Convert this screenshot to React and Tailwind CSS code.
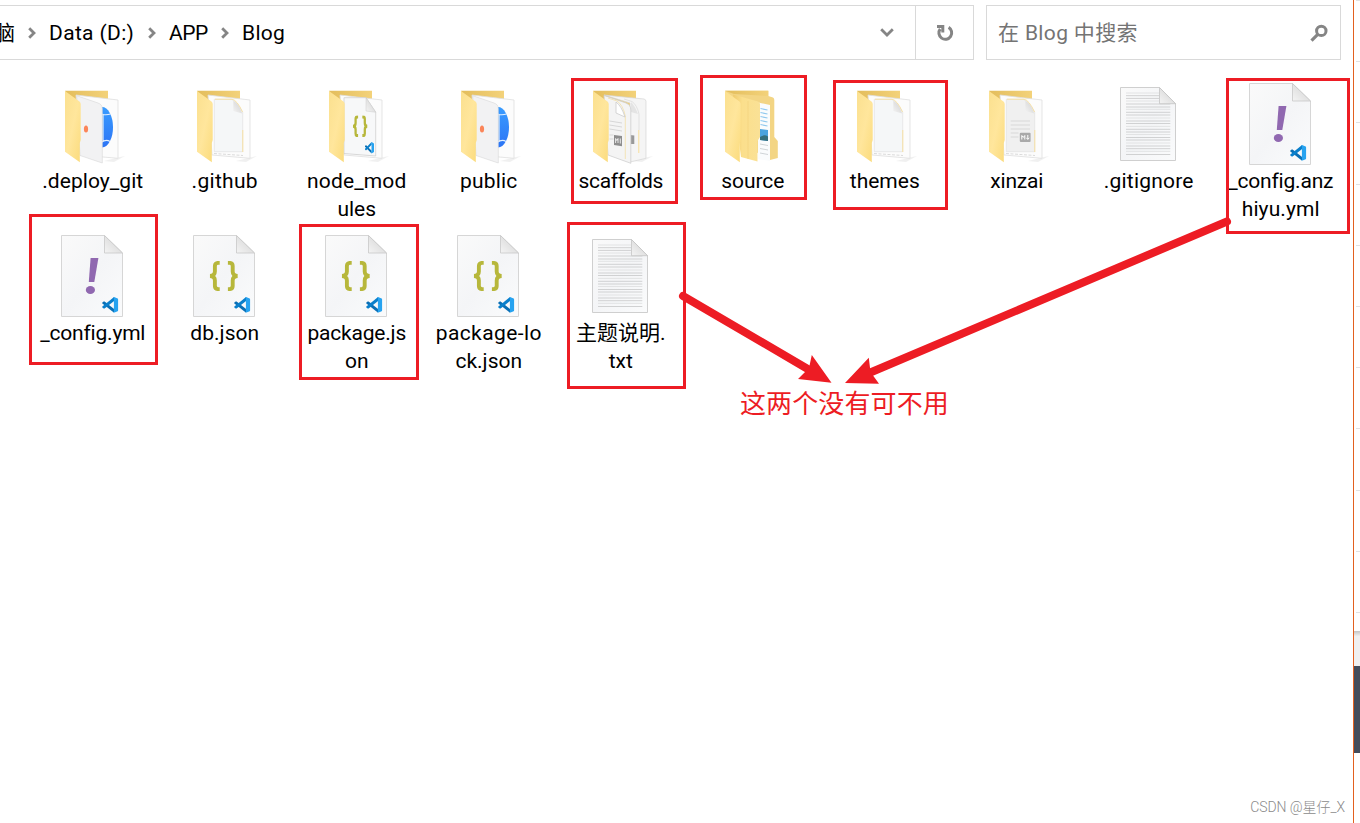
import React from "react";

const SHEET = "M24 12 L66 17 V75.3 L28 72 Z";

function Defs() {
  return (
    <svg className="absolute size-0" aria-hidden="true">
      <defs>
        <linearGradient id="flap" x1="0" y1="0" x2="1" y2="1">
          <stop offset="0" stopColor="#fbe08f" />
          <stop offset="0.5" stopColor="#ffe69c" />
          <stop offset="1" stopColor="#fbdb7c" />
        </linearGradient>
        <linearGradient id="back" x1="0" y1="0" x2="1" y2="0">
          <stop offset="0" stopColor="#e3bd5c" />
          <stop offset="1" stopColor="#f3d27a" />
        </linearGradient>
        <linearGradient id="mid" x1="0" y1="0" x2="1" y2="0">
          <stop offset="0" stopColor="#efca6c" />
          <stop offset="0.35" stopColor="#fbdf8c" />
          <stop offset="1" stopColor="#fae196" />
        </linearGradient>
        <linearGradient id="page" x1="0" y1="0" x2="1" y2="1">
          <stop offset="0" stopColor="#fafafa" />
          <stop offset="0.5" stopColor="#f4f5f7" />
          <stop offset="1" stopColor="#fafbfc" />
        </linearGradient>
        <linearGradient id="fold" x1="0" y1="1" x2="1" y2="0">
          <stop offset="0" stopColor="#f4f4f4" />
          <stop offset="1" stopColor="#cfcfcf" />
        </linearGradient>
        <linearGradient id="blue" x1="0" y1="0" x2="0" y2="1">
          <stop offset="0" stopColor="#399cff" />
          <stop offset="1" stopColor="#2c74f5" />
        </linearGradient>
      </defs>
    </svg>
  );
}

function Icon({ children }) {
  return (
    <svg className="block h-[84px] w-20 shrink-0" viewBox="0 0 80 84">
      {children}
    </svg>
  );
}

function CodeMark({ x, y, w, h }) {
  return (
    <svg x={x} y={y} width={w} height={h} viewBox="0 0 100 100" preserveAspectRatio="none">
      <path d="M2 35 L10 28 L16 29 L74 76 V100 L2 41 Z" fill="#0a6fb5" />
      <path d="M2 66 L10 73 L16 72 L74 25 V0 L2 60 Z" fill="#0a7fcb" />
      <path d="M68 1 L74 0 L96 10 Q100 12 100 17 V83 Q100 88 96 90 L74 100 L68 98 Q73 98 73 91 V9 Q73 2 68 1 Z" fill="#27a3f0" />
    </svg>
  );
}

function Braces({ x, y, w, h, stroke }) {
  return (
    <svg x={x} y={y} width={w} height={h} viewBox="0 0 29 30" preserveAspectRatio="none" fill="none" stroke="#b7b73b" strokeWidth={stroke}>
      <path d="M10.4 1.9 H9 Q5.6 1.9 5.6 5 V10.5 Q5.6 14.6 .8 15 Q5.6 15.4 5.6 19.5 V25 Q5.6 28.1 9 28.1 H10.4" />
      <path d="M18.6 1.9 H20 Q23.4 1.9 23.4 5 V10.5 Q23.4 14.6 28.2 15 Q23.4 15.4 23.4 19.5 V25 Q23.4 28.1 20 28.1 H18.6" />
    </svg>
  );
}

function FolderBack() {
  return (
    <>
      <path d="M52 78 L66 74.5 L73 73 L62 79 Z" fill="#e9e9e9" opacity=".7" />
      <path d="M13 7.7 H56 V40 H28 Z" fill="url(#back)" />
    </>
  );
}

function Sheet() {
  return <path d={SHEET} fill="#fcfcfc" stroke="#dedede" strokeWidth=".8" />;
}

function Flap() {
  return <path d="M13 8 L27.5 18.5 Q28.7 19.5 28.7 21 V57 L27.8 60 V79.3 L13 68.7 Z" fill="url(#flap)" />;
}

function SiteFolder() {
  return (
    <Icon>
      <FolderBack />
      <Sheet />
      <path d="M50 24 A11 20.2 0 0 1 50 64.4 Z" fill="url(#blue)" />
      <path d="M49 31 Q54 32.5 58.5 31 M49 59.5 Q54 56 58 58.5 M51 31 V59" stroke="#e2f0ff" strokeWidth="1.2" fill="none" />
      <path d="M24.7 12.7 L46 20 Q50.3 21.5 50.3 25.5 V80 L28 72.5 Z" fill="#f2f2f3" stroke="#d6d6d6" strokeWidth=".6" />
      <ellipse cx="34" cy="46" rx="2.1" ry="3.5" fill="#fb8559" />
      <Flap />
    </Icon>
  );
}

function PageFolder({ markdown }) {
  return (
    <Icon>
      <FolderBack />
      <Sheet />
      <path d="M30.3 16.3 H47 Q52 17 58.7 29 V68.7 H30.3 Z" fill={markdown ? "#f0f0f0" : "#f5f7f8"} stroke="#dedede" strokeWidth=".6" />
      <path d="M31 16.2 L48 16.2 Q53 17 58.5 29 M58.8 47 V69" fill="none" stroke="#f8df9a" strokeWidth=".9" />
      <path d="M49.3 17.5 V28 L58.3 30.5 Q55 21 49.3 17.5 Z" fill="url(#fold)" />
      <path d="M30 70.5 L59 72.5" stroke="#d2d2d2" strokeWidth=".8" strokeDasharray="3 1.5" />
      {markdown && (
        <>
          <path d="M34.7 38 H54 M34.7 42 H54 M34.7 46 H54 M34.7 50 H42.5 M34.7 54 H42.5" stroke="#d8d8d8" strokeWidth="1" />
          <rect x="43.8" y="49.7" width="10.8" height="9.3" rx="1" fill="#a9a9a9" />
          <path d="M45.8 56.5 V52.5 L47.3 54.4 L48.8 52.5 V56.5 M51.8 52 V56 M50.4 54.8 L51.8 56.5 L53.2 54.8" stroke="#fff" strokeWidth="1" fill="none" />
        </>
      )}
      <Flap />
    </Icon>
  );
}

function ModulesFolder() {
  return (
    <Icon>
      <FolderBack />
      <Sheet />
      <path d="M28 14.7 H50 L59.7 29 V73 L28 70.5 Z" fill="#f7f8f9" stroke="#cfcfcf" strokeWidth=".8" />
      <path d="M50 14.7 V28 L59.7 29.3 Z" fill="url(#fold)" stroke="#cccccc" strokeWidth=".5" />
      <Braces x={36.7} y={32.5} w={15} h={21.5} stroke={4.4} />
      <CodeMark x={48.8} y={59} w={9.2} h={11.4} />
      <Flap />
    </Icon>
  );
}

function ScaffoldsFolder() {
  return (
    <Icon>
      <FolderBack />
      <path d="M24 12 L64 16 Q66 16.5 66 18.5 V75.3 L50 79 V20 Z" fill="#f5f5f5" stroke="#d6d6d6" strokeWidth=".7" />
      <path d="M44 16 L52 18.5 Q57 22 59 31 V47" fill="none" stroke="#dcdcdc" strokeWidth=".8" />
      <path d="M51 19 V29 L58 31 Q55 23 51 19 Z" fill="#e4e4e4" />
      <path d="M58.8 47 V70" stroke="#f8df9a" />
      <path d="M50 52 L54.3 52.5 V61 H50 Z" fill="#999999" />
      <path d="M24 12.4 L46 20 Q50.8 22 50.8 27 V80.3 L28 72 Z" fill="#f4f4f4" stroke="#cfcfcf" strokeWidth=".8" />
      <path d="M28 15 L37 18 Q43 22 45.3 33 V76" fill="none" stroke="#f3dfa8" strokeWidth=".8" />
      <path d="M36 19 V30 L45 34 Q41.5 23 36 19 Z" fill="#ffffff" stroke="#cccccc" strokeWidth=".8" />
      <path d="M29.5 38 L42 40 M29.5 42 L42 44 M29.5 46 L42 48 M29.5 52 H33.5 M29.5 56 H33.5" stroke="#d7d7d7" />
      <path d="M34 52 L42 53 V63.3 L34 62 Z" fill="#8e8e8e" />
      <path d="M35.6 60 V55.5 L36.8 57.5 L38 55.5 V60 M40.3 55.5 V60.5" stroke="#fff" strokeWidth=".8" fill="none" />
      <Flap />
    </Icon>
  );
}

function SourceFolder() {
  return (
    <Icon>
      <path d="M13 7.7 H56.3 V13 L61 14.5 Q62.3 15 62.3 17 V54 L65.8 58 V75 L58 77 L28 60 Z" fill="#f3d584" />
      <path d="M13 7.7 H56.3 V13 L22 11 Z" fill="url(#back)" />
      <path d="M46 19.5 L58 22 V78 L46 76 Z" fill="#fafcfd" />
      <path d="M48.5 25.5 L55.5 27 M48.5 29.5 L55.5 31 M48.5 33.5 L55.5 35 M48.5 37.5 L55.5 39 M48.5 41.5 L55.5 43" stroke="#8fc8ee" strokeWidth="1.2" />
      <path d="M48 46 L56 47 V58 L48 57 Z" fill="#4aa3df" />
      <path d="M48 54 Q52 51 56 53.5 V58 L48 57 Z" fill="#356f7d" />
      <path d="M48 61 L56 62.5 M48 65.5 L56 67 M48 70 L56 71.5" stroke="#cfd4d7" strokeWidth="1" />
      <path d="M21 11.5 L46 18.5 Q48 19 48 21 V54 L45.5 58 V78.5 L29 74 Z" fill="url(#mid)" />
      <path d="M36 18 V76" stroke="#f1d07a" strokeWidth=".6" />
      <Flap />
    </Icon>
  );
}

const RULES = [10, 12.7, 15.4, 18, 21, 24, 26.3, 29.3, 32, 35, 38, 40.5, 43.4, 46.3, 49, 51.5, 54.5, 57, 60, 63, 65.7, 68.3, 71.5];

function TextFile() {
  return (
    <Icon>
      <path d="M12.5 4.5 H51.5 L67.5 20.7 V77.5 H12.5 Z" fill="url(#page)" stroke="#cfcfcf" />
      {RULES.map((y, i) => (
        <line key={y} x1="18" x2={y < 21 ? 51 : 62.3} y1={y} y2={y} stroke={i % 3 === 0 ? "#e2e3e4" : "#d0d1d2"} strokeWidth="1" />
      ))}
      <path d="M51.5 4.5 V20.7 H67.5 Z" fill="url(#fold)" stroke="#c4c4c4" strokeWidth=".8" />
    </Icon>
  );
}

function CodeFile({ children }) {
  return (
    <Icon>
      <path d="M9.5 .5 H52.5 L70.5 18 V81.5 H9.5 Z" fill="url(#page)" stroke="#d6d6d6" />
      <path d="M52.5 .5 V18 H70.5 Z" fill="url(#fold)" stroke="#c8c8c8" strokeWidth=".8" />
      {children}
      <CodeMark x={50} y={62} w={16.3} h={15.8} />
    </Icon>
  );
}

function YamlFile() {
  return (
    <CodeFile>
      <path d="M38.6 23 H46.4 L42.3 47 H36.8 Z" fill="#9068b0" />
      <ellipse cx="38.4" cy="55" rx="4.6" ry="4" fill="#9068b0" />
    </CodeFile>
  );
}

function JsonFile() {
  return (
    <CodeFile>
      <Braces x={25.3} y={26} w={29} h={30} stroke={3.9} />
    </CodeFile>
  );
}

const ITEMS = [
  { icon: <SiteFolder />, lines: [[".deploy_git", "tracking-[0.05px]"]] },
  { icon: <PageFolder />, lines: [[".github", "tracking-[0.3px]"]] },
  { icon: <ModulesFolder />, lines: [["node_mod", "tracking-[0.15px]"], ["ules", ""]] },
  { icon: <SiteFolder />, lines: [["public", "tracking-[0.2px]"]] },
  { icon: <ScaffoldsFolder />, lines: [["scaffolds", "tracking-[-0.35px]"]] },
  { icon: <SourceFolder />, lines: [["source", "tracking-[-0.1px]"]] },
  { icon: <PageFolder />, lines: [["themes", ""]] },
  { icon: <PageFolder markdown />, lines: [["xinzai", "tracking-[-0.2px]"]] },
  { icon: <TextFile />, lines: [[".gitignore", "tracking-[0.2px]"]] },
  { icon: <YamlFile />, lines: [["_config.anz", "tracking-[-0.2px]"], ["hiyu.yml", "tracking-[0.1px]"]] },
  { icon: <YamlFile />, lines: [["_config.yml", "tracking-[-0.2px]"]] },
  { icon: <JsonFile />, lines: [["db.json", "tracking-[0.05px]"]] },
  { icon: <JsonFile />, lines: [["package.js", "tracking-[-0.2px]"], ["on", ""]] },
  { icon: <JsonFile />, lines: [["package-lo", "tracking-[0.4px]"], ["ck.json", ""]] },
  { icon: <TextFile />, lines: [["主题说明.", ""], ["txt", ""]] },
];

function Item({ icon, lines }) {
  return (
    <div className="flex h-[152px] flex-col items-center pt-[11px]">
      {icon}
      {lines.map(([text, tracking]) => (
        <span key={text} className={`block whitespace-nowrap pl-[1.5px] text-[21px] leading-7 ${tracking}`}>{text}</span>
      ))}
    </div>
  );
}

function Crumb() {
  return (
    <svg className="h-3 w-2 shrink-0" viewBox="0 0 8 12" fill="none" stroke="#858585" strokeWidth="2.8">
      <path d="M1.2 1.2 L6 6 L1.2 10.8" />
    </svg>
  );
}

function AddressBar() {
  return (
    <header className="flex h-[72px] w-[1353px] items-start pt-[5px] text-[21px] leading-7">
      <div className="flex h-[55px] w-[974px] shrink-0 items-center overflow-hidden border border-l-0 border-[#d9d9d9]">
        <span className="-ml-[6px] mr-[13px]">脑</span>
        <Crumb />
        <span className="ml-[13px] w-[86px] shrink-0 whitespace-nowrap tracking-[0.35px]">Data (D:)</span>
        <span className="ml-[13px] flex"><Crumb /></span>
        <span className="ml-[13px] w-[39px] shrink-0 tracking-[-0.5px]">APP</span>
        <span className="ml-[13px] flex"><Crumb /></span>
        <span className="ml-[13px] tracking-[0.3px]">Blog</span>
        <svg className="ml-auto mr-[21px] h-[9px] w-[14px]" viewBox="0 0 14 9" fill="none" stroke="#858585" strokeWidth="2.8">
          <path d="M1.2 1.3 L7 7 L12.8 1.3" />
        </svg>
        <div className="flex h-full w-[58px] items-center justify-center border-l border-[#d9d9d9]">
          <svg className="size-[18px]" viewBox="0 0 18 18" fill="none" stroke="#858585" strokeWidth="3">
            <path d="M12.6 3.4 A6.4 6.4 0 1 1 4.2 5 M1 2.5 H6.8 V8.4" />
          </svg>
        </div>
      </div>
      <div className="ml-3 flex h-[55px] w-[355px] shrink-0 items-center justify-between border border-[#d9d9d9] pl-[11px] pr-[12px] text-[#747474]">
        <span className="tracking-[0.35px]">在 Blog 中搜索</span>
        <svg className="size-[18px]" viewBox="0 0 18 18" fill="none" stroke="#858585">
          <circle cx="11.3" cy="6.9" r="4.7" strokeWidth="3" />
          <path d="M8 10.2 L1.5 16.6" strokeWidth="3.2" />
        </svg>
      </div>
    </header>
  );
}

const MARKS = [
  "left-[571px] top-[78px] h-[126px] w-[107px]",
  "left-[700px] top-[75px] h-[125px] w-[107px]",
  "left-[833px] top-[80px] h-[130px] w-[115px]",
  "left-[1226px] top-[78px] h-[156px] w-[124px]",
  "left-[29px] top-[214px] h-[151px] w-[129px]",
  "left-[299px] top-[224px] h-[156px] w-[120px]",
  "left-[567px] top-[222px] h-[167px] w-[119px]",
];

function Annotations() {
  return (
    <div className="pointer-events-none absolute inset-0">
      {MARKS.map((m) => (
        <div key={m} className={`absolute border-3 border-[#ed1c24] ${m}`} />
      ))}
      <svg className="absolute inset-0 h-full w-full" viewBox="0 0 1360 823" fill="#ed1c24" stroke="none">
        <path d="M683 296 L812 371.5 M1227 221.5 L868 373.5" stroke="#ed1c24" strokeWidth="8" strokeLinecap="round" />
        <path d="M831.5 382.8 L811.8 355 L809 368 L798 379 Z" />
        <path d="M845 383 L868.8 357.8 L870.5 372 L879 383.7 Z" />
      </svg>
      <p className="absolute left-[740px] top-[385px] whitespace-nowrap text-[26px] leading-[38px] tracking-[0.12px] text-[#ed1c24]">这两个没有可不用</p>
      <p className="absolute right-[15px] top-[797px] whitespace-nowrap text-[14px] font-light leading-5 tracking-[-0.05px] text-[#8a8a8a]">CSDN @星仔_X</p>
    </div>
  );
}

function SideStrip() {
  return (
    <aside className="flex h-full w-[7px] flex-col border-l border-[#e2601f] bg-white">
      <div className="flex h-[631px] flex-col items-end">
        {Array.from({ length: 11 }, (_, i) => (
          <div key={i} className="h-[61.2px] w-1 shrink-0 border-t border-[#e2e2e2]" />
        ))}
      </div>
      <div className="h-[35px] bg-[#f0f0f0] bg-linear-to-b from-[#c4c4c4] to-[#f0f0f0] to-15%" />
      <div className="h-[87px] bg-[#434c5b]" />
    </aside>
  );
}

export default function App() {
  return (
    <div className="relative flex h-[823px] w-[1360px] overflow-hidden bg-white font-['Roboto','Noto_Sans_CJK_SC',sans-serif] font-normal text-black">
      <Defs />
      <div className="w-[1353px] shrink-0">
        <AddressBar />
        <main className="grid w-[1320px] grid-cols-[repeat(10,132px)] pl-[26px]">
          {ITEMS.map((it) => (
            <Item key={it.lines[0][0]} {...it} />
          ))}
        </main>
      </div>
      <SideStrip />
      <Annotations />
    </div>
  );
}
